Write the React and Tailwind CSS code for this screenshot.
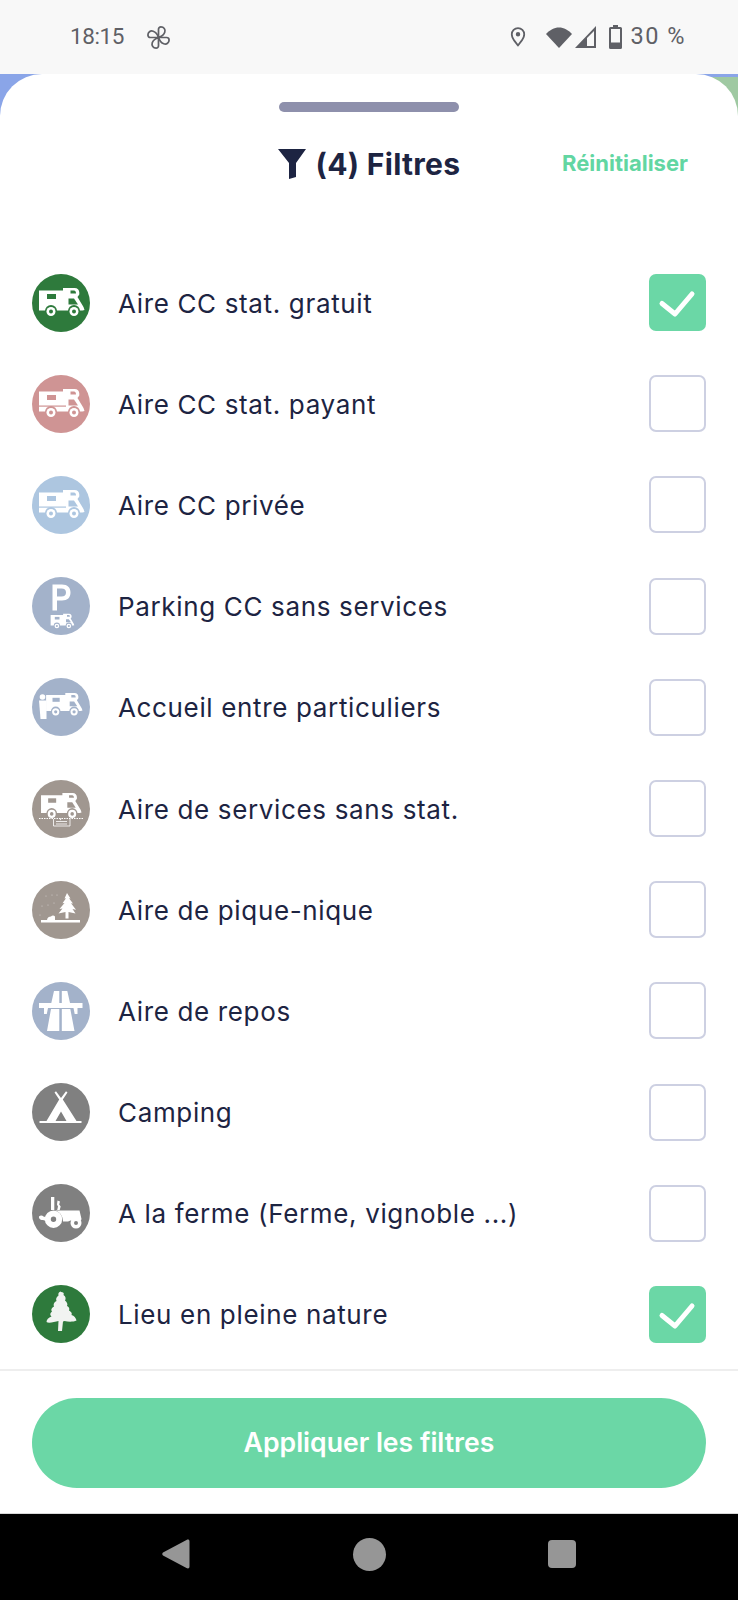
import React from "react";

const Camper = ({ line }) => (
  <g>
    <path fill="#fff" d="M7 16.500h24v-2.500h11.500c3 0 4.800 2 4.800 4.500v2L45.500 23l6 10 1 3-2 .5H7z" />
    <rect x="15" y="20" width="9" height="5" fill="currentColor" />
    <path fill="currentColor" d="M38.500 16.500h3.500c1.200 0 2 1 2 3h-5.500z" />
    <path fill="currentColor" d="M36.500 24.500h5.500l4 6H36.500z" />
    {line && <rect x="7" y="30.500" width="27" height="1.200" fill="currentColor" />}
    <circle cx="19" cy="37" r="6" fill="currentColor" />
    <circle cx="42" cy="37" r="6" fill="currentColor" />
    <circle cx="19" cy="37.500" r="4.500" fill="#fff" />
    <circle cx="42" cy="37.500" r="4.500" fill="#fff" />
    <circle cx="19" cy="37.500" r="2" fill="currentColor" />
    <circle cx="42" cy="37.500" r="2" fill="currentColor" />
  </g>
);

const Icons = {
  free: <Camper />,
  paid: <Camper line />,
  priv: <Camper line />,
  parking: (
    <g>
      <path fill="#fff" fillRule="evenodd" d="M20.500 7.500h9.500c5.500 0 8.500 3 8.500 8s-3 8-8.500 8h-5v10h-4.500zM25 11.500v8h4.500c3 0 4.500-1.500 4.500-4s-1.500-4-4.500-4z" />
      <g transform="translate(15 29.500) scale(.52)"><Camper /></g>
    </g>
  ),
  host: (
    <g>
      <circle cx="10.500" cy="19" r="2.800" fill="#fff" />
      <path fill="#fff" d="M7 22.500h7.500V41H8.500z" />
      <g transform="translate(8.500 3.800) scale(.8)"><Camper /></g>
    </g>
  ),
  service: (
    <g>
      <g transform="translate(2.800 .5) scale(.89)"><Camper /></g>
      <path stroke="#fff" strokeWidth="1" strokeDasharray="1.500 1" d="M7 38.500h44" fill="none" />
      <path fill="none" stroke="#fff" strokeWidth="1" opacity=".8" d="M21.500 39v7h16.500v-7M24 41.500h11M24 44h11" />
      <path fill="#fff" d="M27.500 38.500h2l-1 2z" />
    </g>
  ),
  picnic: (
    <g fill="#fff">
      <path d="M35 12l3.500 5.500-1.500-.3 4 5.300-2-.2 5 6.500-3.500-.8 3 4.500-7-1.500v6.500h-3V31l-7 1.500 4-5-3 .5 5-6-2 .2 3.500-5-1.500.2z" />
      <path d="M9 39h39v2.500H9z" />
      <path d="M15 39c.5-3 2-3.500 4-3.500 1-1.500 3-1.500 4 0v3.500z" />
      <g opacity=".55">
        <circle cx="14" cy="15" r=".6" /><circle cx="20" cy="14" r=".6" /><circle cx="25" cy="14" r=".6" /><circle cx="10" cy="25" r=".6" /><circle cx="16" cy="24" r=".6" /><circle cx="8" cy="34" r=".6" /><circle cx="22" cy="22" r=".6" />
      </g>
    </g>
  ),
  road: (
    <g fill="#fff">
      <path d="M22 9h5.300v12h-8zM29.800 9h5.500l2.700 12h-8.200z" />
      <path d="M7 21h43.500v5H45.500v6h-2.800l-1.200-6H16l-1.200 6H12v-6H7z" />
      <path d="M19 27h8.300v22H15zM29.800 27h8.500l4.200 22H29.800z" />
    </g>
  ),
  tent: (
    <g fill="#fff">
      <path fillRule="evenodd" d="M14.500 38L27.200 16.500 22.500 9.500l1.500-1.200L29 15l5-6.700 1.500 1.200-4.700 7L44.500 38H49.500v2H7.500v-2zM29 28.500L23.500 38h11z" />
    </g>
  ),
  tractor: (
    <g fill="#fff">
      <path d="M19 13h3.300v13H19z" />
      <path d="M25.500 16.500l2.500 1-.8 3 1.500 2-1 3.500h-2.500l.8-3.500-1-2z" />
      <path d="M22 26.500h25.500l2 8.500-.5 1.500H38.500l-2.500 1h-5c0-6-4-11-9-11z" />
      <path fillRule="evenodd" d="M21.500 26.500a8.700 8.700 0 1 1 0 17.400 8.700 8.700 0 0 1 0-17.400zm0 6a2.700 2.700 0 1 0 0 5.400 2.700 2.700 0 0 0 0-5.400z" />
      <path fillRule="evenodd" d="M44 33.500a5.500 5.500 0 1 1 0 11 5.500 5.500 0 0 1 0-11zm0 3.500a2 2 0 1 0 0 4 2 2 0 0 0 0-4z" />
      <path d="M7 32.500c1.500-1.500 3.500-1 4.500 0l3.500 1-1 3.500-3-1c-2 .5-4.500-1.500-4-3.500z" />
    </g>
  ),
  tree: (
    <path fill="#f1f3f1" d="M29 7c2 0 3.500 1 2.500 3 2.500 1.500 2.500 4 1.500 5.500 2 1.500 3 4 2 5.500 1.500.5 3 2.500 2 4.500 2 1 3.500 3 2.500 4.500 2.500.5 4.500 3 5 5.500-3 1.500-8 1.500-12 .5l-1.500.5-1 9.500h-4l.5-10c-4 1-10 2.500-12 1 0-2.500 2-4.500 5-5.500-2-1.500-1.500-3.500.5-5-1.500-2 0-4 2-5-1-2 0-4.500 2.500-5.500-1-2 0-4 2-5.500-.5-2 0-3.500 2.500-4z" />
  ),
};

const rows = [
  ["Aire CC stat. gratuit", "bg-[#2e7a3c] text-[#2e7a3c]", "free", true],
  ["Aire CC stat. payant", "bg-[#cf9494] text-[#cf9494]", "paid", false],
  ["Aire CC privée", "bg-[#adc6e0] text-[#adc6e0]", "priv", false],
  ["Parking CC sans services", "bg-[#a3b2ca] text-[#a3b2ca]", "parking", false],
  ["Accueil entre particuliers", "bg-[#a3b2ca] text-[#a3b2ca]", "host", false],
  ["Aire de services sans stat.", "bg-[#a09790] text-[#a09790]", "service", false],
  ["Aire de pique-nique", "bg-[#a09790] text-[#a09790]", "picnic", false],
  ["Aire de repos", "bg-[#a3b2ca] text-[#a3b2ca]", "road", false],
  ["Camping", "bg-[#808080] text-[#808080]", "tent", false],
  ["A la ferme (Ferme, vignoble ...)", "bg-[#808080] text-[#808080]", "tractor", false],
  ["Lieu en pleine nature", "bg-[#2e7a3c] text-[#2e7a3c]", "tree", true],
];

const petal = "M13 13V4.500C13 3 14 2 15.500 2c3 0 5 2.500 4 5.500-.8 2.500-3.500 4.500-6.500 5.500z";

const Row = ({ label, bg, icon, checked }) => (
  <div className="flex h-[101.200px] items-center">
    <div className={`h-[58px] w-[58px] shrink-0 rounded-full ${bg}`}>
      <svg viewBox="0 0 58 58" className="h-[58px] w-[58px]">{Icons[icon]}</svg>
    </div>
    <span className="ml-[28px] flex-1 pt-[2px] text-[26px] leading-[34px] tracking-[0.65px] text-[#1d2442]">{label}</span>
    {checked ? (
      <div className="flex h-[57px] w-[57px] items-center justify-center rounded-[7px] bg-[#6bd7a6]">
        <svg viewBox="0 0 57 57" className="h-[57px] w-[57px]">
          <path d="M13 29.500L26 40 43 20" fill="none" stroke="#fff" strokeWidth="5" strokeLinecap="round" strokeLinejoin="round" />
        </svg>
      </div>
    ) : (
      <div className="h-[57px] w-[57px] rounded-[7px] border-2 border-[#cdd0e2] bg-white" />
    )}
  </div>
);

export default function App() {
  return (
    <div className="flex h-[1600px] w-[738px] flex-col overflow-hidden bg-white font-['Inter','Noto_Sans',sans-serif]">
      <div className="flex h-[74px] shrink-0 items-center bg-[#f8f8f8] pr-[52px] pl-[70px] font-['Roboto',sans-serif] text-[#5f6066]">
        <span className="text-[22.500px] tracking-[-0.4px]">18:15</span>
        <svg viewBox="0 0 26 26" className="ml-[22px] h-[25px] w-[25px]" fill="none" stroke="#5f6066" strokeWidth="1.800">
          <path d={petal} />
          <path d={petal} transform="rotate(90 13 13)" />
          <path d={petal} transform="rotate(180 13 13)" />
          <path d={petal} transform="rotate(270 13 13)" />
        </svg>
        <div className="flex-1" />
        <svg viewBox="0 0 18 24" className="h-[22px] w-[16px]">
          <path fillRule="evenodd" fill="#5f6066" d="M9 1a8 8 0 0 1 8 8c0 5-5 10.500-8 14-3-3.500-8-9-8-14a8 8 0 0 1 8-8zm0 2a6 6 0 0 0-6 6c0 3.500 3.300 7.500 6 10.900 2.700-3.400 6-7.400 6-10.900a6 6 0 0 0-6-6zm0 3.500a2.500 2.500 0 1 1 0 5 2.500 2.500 0 0 1 0-5z" />
        </svg>
        <svg viewBox="0 0 26 21" className="ml-[20px] h-[21px] w-[26px]">
          <path fill="#5f6066" d="M13 21L0 7C4 3 8 .5 13 .5S22 3 26 7z" />
        </svg>
        <svg viewBox="0 0 21 22" className="ml-[3px] h-[22px] w-[21px]">
          <path fillRule="evenodd" fill="#5f6066" d="M21 0v22H0zM19 5L12 12v8h7z" />
        </svg>
        <svg viewBox="0 0 13 24" className="ml-[13px] h-[24px] w-[13px]">
          <path fillRule="evenodd" fill="#5f6066" d="M4 0h5v2h2.500A1.500 1.500 0 0 1 13 3.500v19a1.500 1.500 0 0 1-1.500 1.500h-10A1.500 1.500 0 0 1 0 22.500v-19A1.500 1.500 0 0 1 1.500 2H4zM2 4v13.500h9V4z" />
        </svg>
        <span className="ml-[9px] text-[23.500px] tracking-[1.5px]">30 %</span>
      </div>

      <div className="flex-1 bg-[linear-gradient(180deg,#8aa5e8_3px,transparent_3px),linear-gradient(90deg,#8aa5e8_50%,#9fc9a2_50%)]">
        <div className="flex h-[1439px] flex-col rounded-t-[42px] bg-white">
          <div className="mx-auto mt-[28px] h-[10px] w-[180px] rounded-full bg-[#8e90ac]" />
          <div className="relative mt-[37px] flex h-[30px] items-center justify-center">
            <svg viewBox="0 0 28 30" className="h-[30px] w-[28px]">
              <path fill="#1d2442" d="M0 0h28L18 14v14l-7 2V14z" />
            </svg>
            <span className="ml-[10px] text-[30px] leading-[30px] font-bold tracking-[0.3px] text-[#1d2442]">(4) Filtres</span>
            <span className="absolute top-[1px] right-[50px] text-[22px] leading-[26px] font-bold text-[#62d6a2]">Réinitialiser</span>
          </div>
          <div className="mt-[73px] flex flex-col px-[32px]">
            {rows.map(([label, bg, icon, checked]) => (
              <Row key={label} label={label} bg={bg} icon={icon} checked={checked} />
            ))}
          </div>
          <div className="mt-[4px] h-[2px] bg-[#eeeeee]" />
          <div className="mt-[27px] px-[32px]">
            <div className="flex h-[90px] items-center justify-center rounded-full bg-[#6bd7a6] text-[26.600px] font-semibold text-white">
              Appliquer les filtres
            </div>
          </div>
        </div>
        <div className="flex h-[87px] items-center border-t border-[#d8d8d8] bg-black pb-[6px]">
          <div className="flex w-full items-center">
            <svg viewBox="0 0 28 30" className="ml-[162px] h-[30px] w-[28px]">
              <path fill="#969696" d="M24.500 1c1.500-1 3-.5 3 1.500v25c0 2-1.500 2.500-3 1.500L1 16.500c-1-1-1-2 0-3z" />
            </svg>
            <div className="ml-[163px] h-[33px] w-[33px] rounded-full bg-[#969696]" />
            <div className="ml-[162px] h-[28px] w-[28px] rounded-[4px] bg-[#969696]" />
          </div>
        </div>
      </div>
    </div>
  );
}
